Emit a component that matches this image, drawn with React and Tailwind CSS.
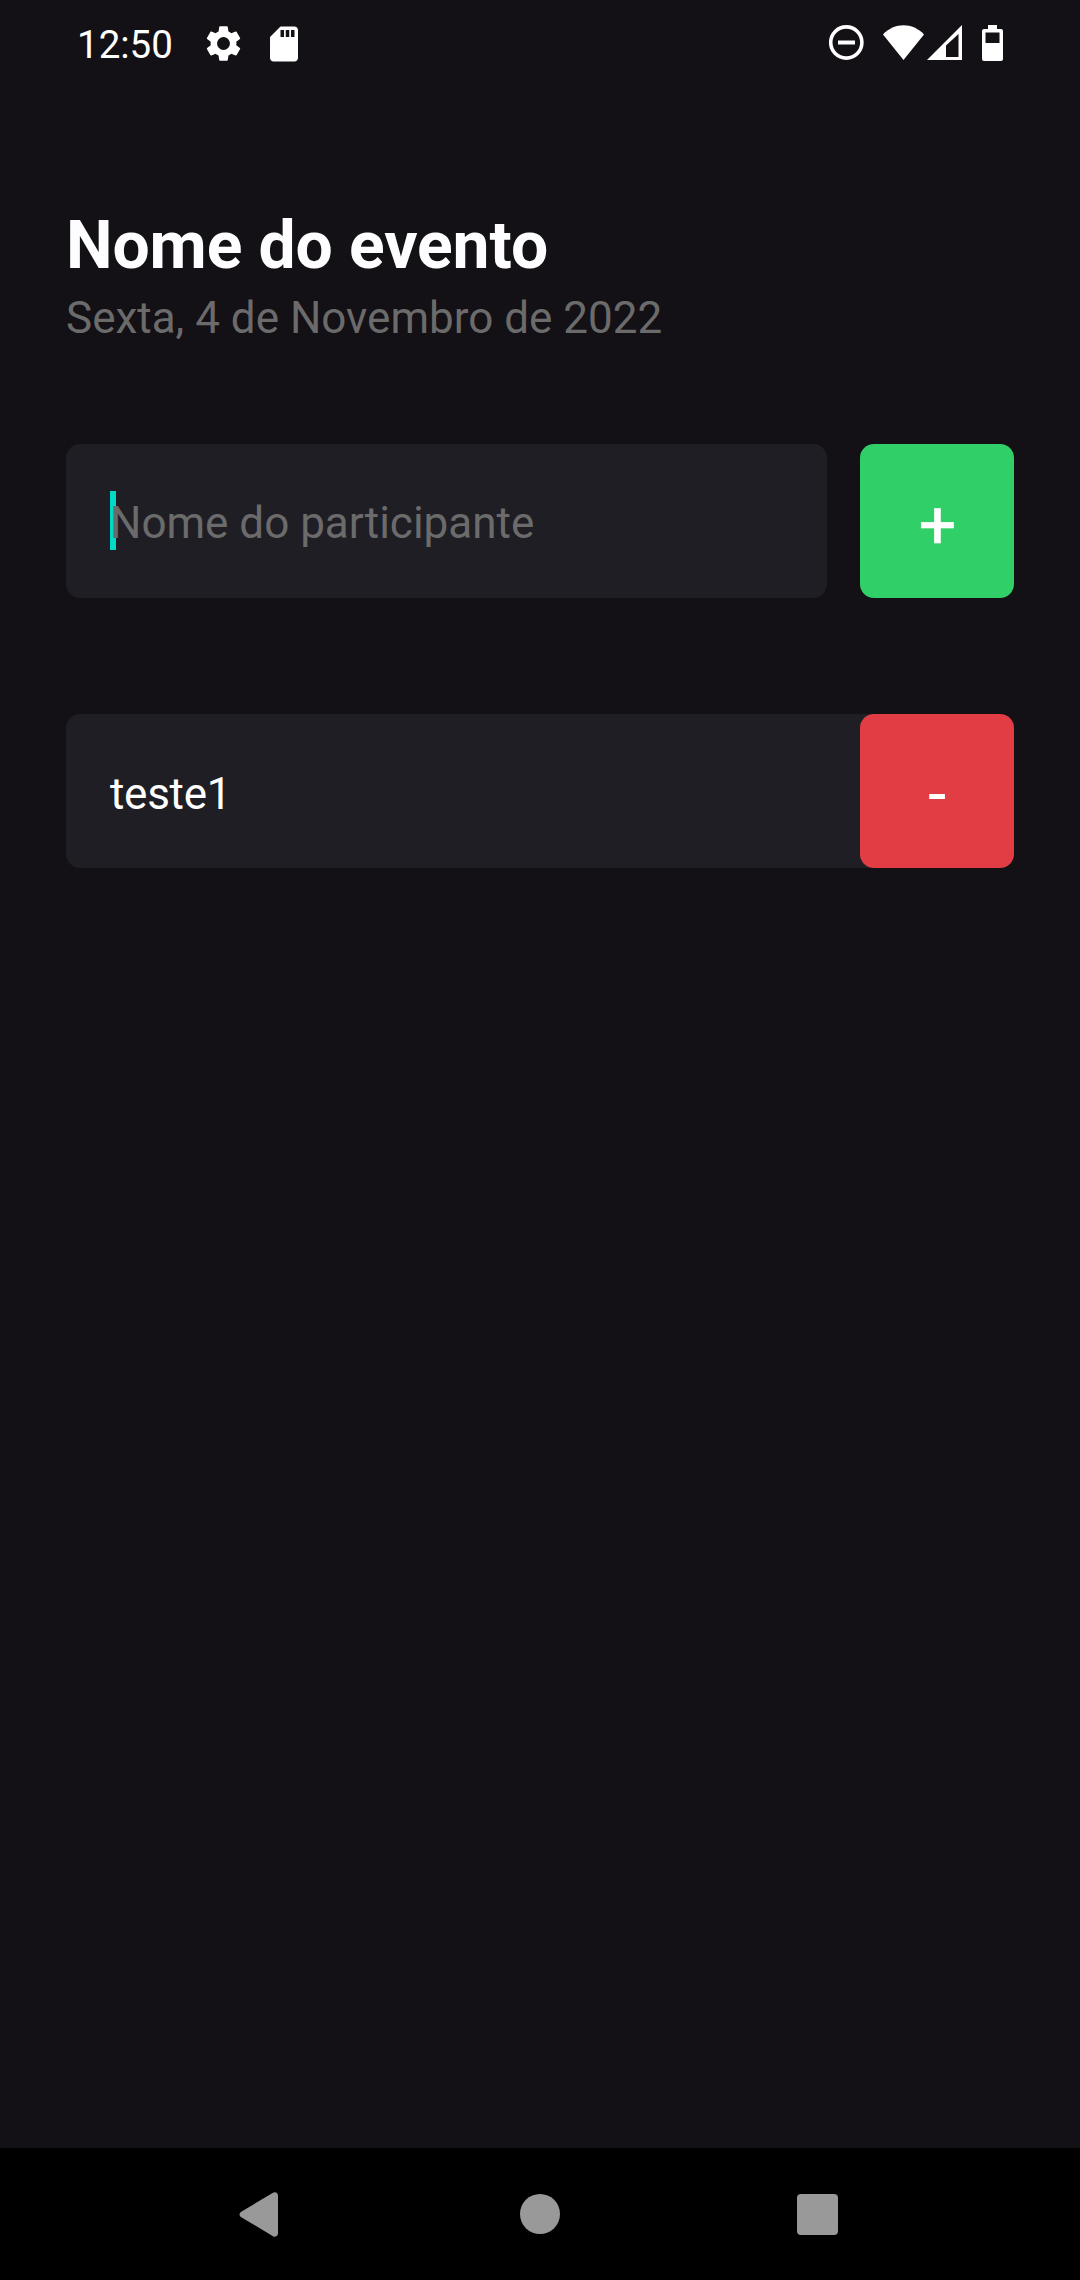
import React from "react";

function StatusBar() {
  return (
    <header className="flex h-[84px] shrink-0 items-center justify-between pl-[77px] pr-[77px] text-white">
      <div className="flex items-center">
        <span className="mt-[5px] w-[125px] whitespace-nowrap text-[38.5px] leading-[46px]">12:50</span>
        <svg className="mt-[3px] h-[43px] w-[43px]" viewBox="0 0 24 24" fill="currentColor">
          <path d="M19.14 12.94c.04-.3.06-.61.06-.94 0-.32-.02-.64-.07-.94l2.03-1.58c.18-.14.23-.41.12-.61l-1.92-3.32c-.12-.22-.37-.29-.59-.22l-2.39.96c-.5-.38-1.03-.7-1.62-.94l-.36-2.54c-.04-.24-.24-.41-.48-.41h-3.84c-.24 0-.43.17-.47.41l-.36 2.54c-.59.24-1.13.57-1.62.94l-2.39-.96c-.22-.08-.47 0-.59.22L2.74 8.87c-.12.21-.08.47.12.61l2.03 1.58c-.05.3-.09.63-.09.94s.02.64.07.94l-2.03 1.58c-.18.14-.23.41-.12.61l1.92 3.32c.12.22.37.29.59.22l2.39-.96c.5.38 1.03.7 1.62.94l.36 2.54c.05.24.24.41.48.41h3.84c.24 0 .44-.17.47-.41l.36-2.54c.59-.24 1.13-.56 1.62-.94l2.39.96c.22.08.47 0 .59-.22l1.92-3.32c.12-.22.07-.47-.12-.61l-2.01-1.58zM12 15.6A3.6 3.6 0 1 1 12 8.4a3.6 3.6 0 0 1 0 7.2z" />
        </svg>
        <svg className="ml-[18px] mt-[3px] h-[42px] w-[42px]" viewBox="0 0 24 24" fill="currentColor">
          <path d="M18 2h-8L4.02 8 4 20c0 1.1.9 2 2 2h12c1.1 0 2-.9 2-2V4c0-1.1-.9-2-2-2zm-6 6h-2V4h2v4zm3 0h-2V4h2v4zm3 0h-2V4h2v4z" />
        </svg>
      </div>
      <div className="mt-[2px] flex items-center">
        <svg className="h-9 w-9" viewBox="0 0 36 36" fill="none" stroke="currentColor">
          <circle cx="18.3" cy="17.5" r="15.6" strokeWidth="3.6" />
          <path d="M10 17.500h17" strokeWidth="4" />
        </svg>
        <svg className="ml-[19px] h-9 w-[41px]" viewBox="0 0 41 36" fill="currentColor">
          <path d="M20.5 35 0 9.5C5.5 3.5 13 .3 20.5 .3S35.500 3.500 41 9.500z" />
        </svg>
        <svg className="ml-[3px] h-9 w-[35px]" viewBox="0 0 35 36" fill="currentColor">
          <path fillRule="evenodd" d="M0 35 35 0v35zM19 32h12.500V9L19 20.500z" />
        </svg>
        <svg className="ml-5 h-9 w-[21px]" viewBox="0 0 21 36" fill="currentColor">
          <path fillRule="evenodd" d="M6 0h9v4h4a2 2 0 0 1 2 2v28a2 2 0 0 1-2 2H2a2 2 0 0 1-2-2V6a2 2 0 0 1 2-2h4zM3.500 7.500v10.500h14V7.500z" />
        </svg>
      </div>
    </header>
  );
}

function NavigationBar() {
  return (
    <nav className="flex h-[132px] shrink-0 items-start bg-black pl-[239px] pt-11 text-[#999999]">
      <svg className="h-[46px] w-10" viewBox="0 0 40 46" fill="currentColor">
        <path d="M1.800 20 34 .7Q35.500 -.3 37.200 .6 39 1.500 39 3.500V41.500Q39 43.500 37.200 44.300 35.500 45.200 34 44.200L1.800 24.900Q-.8 22.500 1.800 20z" />
      </svg>
      <span className="ml-[241px] mt-[2px] h-10 w-10 rounded-full bg-[#999999]" />
      <span className="ml-[237px] mt-[2px] h-[41px] w-[41px] rounded-[4px] bg-[#999999]" />
    </nav>
  );
}

export default function App() {
  return (
    <div className="flex h-[2280px] w-[1080px] flex-col overflow-hidden bg-[#131016] font-['Roboto',sans-serif]">
      <StatusBar />
      <main className="flex flex-1 flex-col px-[66px] pt-[123px]">
        <h1 className="text-[66px] font-bold leading-[78px] tracking-[-0.1px] text-[#fdfcfe]">Nome do evento</h1>
        <p className="mt-[7px] text-[44px] leading-[52px] text-[#6b6b6b]">Sexta, 4 de Novembro de 2022</p>
        <form className="mt-[100px] flex gap-[33px]" onSubmit={(e) => e.preventDefault()}>
          <div className="flex h-[154px] w-[761px] items-center rounded-[14px] bg-[#1f1e25] pl-11">
            <span className="mb-px h-[59px] w-1.5 bg-[#00dac6]" />
            <span className="relative -ml-1.5 mt-[3px] text-[44px] leading-[52px] text-[#6b6b6b]">Nome do participante</span>
          </div>
          <button className="flex h-[154px] w-[154px] items-center justify-center rounded-[14px] bg-[#31cf67] pl-px pt-[9px] text-[66px] leading-[78px] text-white [-webkit-text-stroke:0.6px_white]">+</button>
        </form>
        <div className="mt-[116px] flex h-[154px] items-center rounded-[14px] bg-[#1f1e25] pl-11">
          <span className="mt-[6px] flex-1 text-[44px] leading-[52px] tracking-[-0.3px] text-white">teste1</span>
          <button className="flex h-[154px] w-[154px] items-center justify-center rounded-[14px] bg-[#e23c44] pt-[8px] text-[66px] leading-[78px] text-white">-</button>
        </div>
      </main>
      <NavigationBar />
    </div>
  );
}
